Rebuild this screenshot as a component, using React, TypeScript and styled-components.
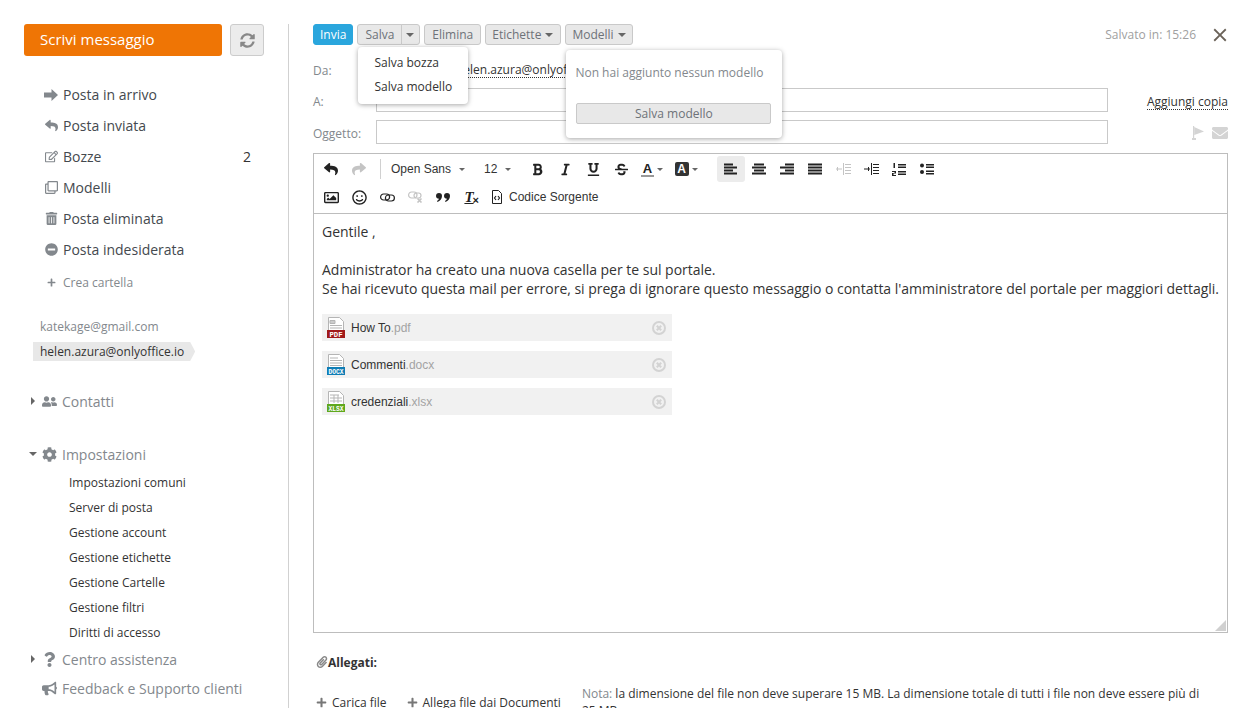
import React from 'react';
import styled, { createGlobalStyle } from 'styled-components';
import {
  FaReply, FaShare, FaRegEdit, FaRegClone, FaTrashAlt, FaMinusCircle, FaUserFriends, FaCog,
  FaQuestion, FaBullhorn, FaPaperclip, FaPlus, FaEnvelope, FaSyncAlt, FaBold, FaItalic, FaUnderline,
  FaStrikethrough, FaRegImage, FaRegSmile,
} from 'react-icons/fa';
import { MdClose } from 'react-icons/md';

const GlobalStyle = createGlobalStyle`
  html, body { margin: 0; padding: 0; background: #fff; overflow: hidden; }
  body { font-family: "Open Sans", "Liberation Sans", sans-serif; font-size: 12px; color: #333; }
  * { box-sizing: border-box; }
`;

const Page = styled.div`
  display: flex;
  width: 1240px;
  height: 708px;
  padding-top: 24px;
  overflow: hidden;
`;

/* sidebar */
const Sidebar = styled.aside`
  width: 289px;
  flex: none;
  height: 700px;
  padding-left: 24px;
  border-right: 1px solid #d1d1d1;
`;

const ComposeRow = styled.div`
  display: flex;
  gap: 8px;
`;

const ComposeButton = styled.div`
  width: 198px;
  height: 32px;
  padding-left: 16px;
  background: #ef7505;
  border-radius: 3px;
  color: #fff;
  font-size: 15px;
  line-height: 31px;
`;

const RefreshButton = styled.div`
  width: 34px;
  height: 32px;
  display: flex;
  align-items: center;
  justify-content: center;
  background: #ececec;
  border: 1px solid #ccc;
  border-radius: 3px;
  color: #888;
  font-size: 15px;
`;

const FolderList = styled.ul`
  list-style: none;
  margin: 23px 0 0;
  padding: 0;
`;

const Folder = styled.li`
  display: flex;
  align-items: center;
  height: 31px;
  padding-left: 20px;
  color: #44494e;
  font-size: 14px;
`;

const FolderIcon = styled.span`
  display: flex;
  justify-content: center;
  width: 14px;
  margin-right: 5px;
  color: #83888d;
  font-size: 13px;
`;

const FolderCount = styled.span`
  margin-left: auto;
  margin-right: 37px;
  color: #333;
`;

const CreateFolder = styled(Folder)`
  margin-top: 2px;
  color: #83888d;
  font-size: 12px;
`;

const Accounts = styled.div`
  margin-top: 19px;
  display: flex;
  flex-direction: column;
  align-items: flex-start;
  gap: 6px;
  padding-left: 9px;
`;

const Account = styled.div<{ $active?: boolean }>`
  height: 19px;
  padding: 0 ${({ $active }) => ($active ? '11px' : '7px')} 0 7px;
  line-height: 19px;
  color: ${({ $active }) => ($active ? '#333' : '#83888d')};
  background: ${({ $active }) => ($active ? '#e8e8e8' : 'transparent')};
  clip-path: polygon(0 0, calc(100% - 5px) 0, 100% 50%, calc(100% - 5px) 100%, 0 100%);
`;

const Section = styled.div<{ $top: number }>`
  display: flex;
  align-items: center;
  height: 20px;
  margin-top: ${({ $top }) => $top}px;
  color: #83888d;
  font-size: 14px;
`;

const Caret = styled.span<{ $open?: boolean; $hidden?: boolean }>`
  width: 0;
  height: 0;
  flex: none;
  margin-left: ${({ $open }) => ($open ? '5px' : '7px')};
  margin-right: ${({ $open }) => ($open ? '5px' : '7px')};
  visibility: ${({ $hidden }) => ($hidden ? 'hidden' : 'visible')};
  border-style: solid;
  border-color: transparent;
  ${({ $open }) =>
    $open
      ? 'border-width: 4px 4px 0 4px; border-top-color: #666;'
      : 'border-width: 4px 0 4px 4px; border-left-color: #666;'}
`;

const SectionIcon = styled.span`
  display: flex;
  justify-content: center;
  width: 15px;
  margin-right: 5px;
  color: #83888d;
  font-size: 15px;
`;

const SubList = styled.ul`
  list-style: none;
  margin: 6px 0 0;
  padding: 0 0 0 45px;
`;

const SubItem = styled.li`
  height: 25px;
  line-height: 25px;
  color: #333;
`;

/* main column */
const Main = styled.main`
  width: 915px;
  margin-left: 24px;
  flex: none;
`;

const TopBar = styled.div`
  display: flex;
  align-items: flex-start;
  height: 21px;
  gap: 4px;
`;

const Btn = styled.div<{ $primary?: boolean; $caret?: boolean; $right?: number }>`
  position: relative;
  height: 21px;
  display: flex;
  align-items: center;
  gap: ${({ $caret }) => ($caret ? '4px' : '3px')};
  padding: 0 ${({ $right }) => $right ?? 7}px 0 ${({ $primary, $caret }) => ($primary || $caret ? '6px' : '7px')};
  background: ${({ $primary }) => ($primary ? '#2aa6dd' : '#e8e8e8')};
  border: 1px solid ${({ $primary }) => ($primary ? '#2aa6dd' : '#c9c9c9')};
  border-radius: 3px;
  color: ${({ $primary }) => ($primary ? '#fff' : '#6d7278')};
  font-size: 12px;
`;

const SplitLeft = styled(Btn)`
  border-radius: 3px 0 0 3px;
`;

const SplitRight = styled(Btn)`
  width: 19px;
  margin-left: -5px;
  padding: 0 0 0 4px;
  border-radius: 0 3px 3px 0;
`;

const BtnCaret = styled.span`
  width: 0;
  height: 0;
  border-style: solid;
  border-color: #666 transparent transparent;
  border-width: 4px 4px 0;
`;

const Popup = styled.div`
  position: absolute;
  z-index: 5;
  background: #fff;
  border-radius: 4px;
  box-shadow: 0 1px 5px rgba(0, 0, 0, 0.35);
`;

const SaveMenu = styled(Popup)`
  top: 22px;
  left: 0;
  width: 110px;
  height: 57px;
  padding-top: 4px;
  color: #333;
`;

const SaveMenuItem = styled.div`
  height: 24px;
  padding-left: 16px;
  line-height: 24px;
`;

const TemplateMenu = styled(Popup)`
  top: 25px;
  left: 0;
  width: 216px;
  height: 88px;
  padding: 14px 11px 0 10px;
  color: #83888d;
`;

const TemplateNote = styled.div`
  height: 18px;
  margin-left: -1px;
  line-height: 18px;
  white-space: nowrap;
`;

const TemplateButton = styled.div`
  height: 21px;
  margin-top: 21px;
  background: #e8e8e8;
  border: 1px solid #c9c9c9;
  border-radius: 2px;
  color: #6d7278;
  text-align: center;
  line-height: 20px;
`;

const SavedAt = styled.div`
  margin-left: auto;
  line-height: 21px;
  color: #a0a0a0;
`;

const CloseIcon = styled.span`
  display: flex;
  align-items: center;
  height: 21px;
  margin: 0 -3px 0 9px;
  color: #6a6258;
  font-size: 22px;
`;

const FieldRow = styled.div<{ $top: number }>`
  display: flex;
  align-items: center;
  margin-top: ${({ $top }) => $top}px;
  height: 24px;
`;

const FieldLabel = styled.label<{ $low?: boolean }>`
  width: 63px;
  flex: none;
  padding-top: ${({ $low }) => ($low ? '3px' : '0')};
  color: #83888d;
`;

const FromValue = styled.span`
  padding-left: 2px;
  color: #333;
  border-bottom: 1px dotted #333;
  line-height: 15px;
  white-space: nowrap;
`;

const FieldBox = styled.div`
  width: 732px;
  height: 24px;
  flex: none;
  border: 1px solid #c9c9c9;
`;

const AddCopy = styled.span`
  margin: 4px 0 0 auto;
  color: #333;
  border-bottom: 1px dotted #333;
  line-height: 15px;
`;

const FieldIcons = styled.div`
  margin-left: auto;
  display: flex;
  align-items: center;
  gap: 8px;
  padding-top: 2px;
  color: #d4d4d4;
  font-size: 16px;
`;

const Editor = styled.div`
  position: relative;
  height: 480px;
  margin-top: 9px;
  border: 1px solid #bdbdbd;
`;

const EditorTools = styled.div`
  height: 60px;
  padding: 1px 0 2px 3px;
  border-bottom: 1px solid #bdbdbd;
`;

const ToolRow = styled.div`
  display: flex;
  height: 28px;
`;

const Tool = styled.span<{ $active?: boolean; $muted?: boolean; $width?: number; $size?: number }>`
  width: ${({ $width }) => $width ?? 28}px;
  height: 26px;
  flex: none;
  margin-top: 1px;
  display: flex;
  align-items: center;
  justify-content: center;
  gap: 3px;
  border-radius: 3px;
  background: ${({ $active }) => ($active ? '#ececec' : 'transparent')};
  color: ${({ $muted }) => ($muted ? '#c4c4c4' : '#222')};
  font-size: ${({ $size }) => $size ?? 13}px;
`;

const ToolDivider = styled.span`
  width: 1px;
  height: 20px;
  margin: 4px 0 0 7px;
  background: #d0d0d0;
`;

const ToolGap = styled.span`
  width: 14px;
  flex: none;
`;

const ToolSelect = styled.span<{ $width: number; $pad: number }>`
  width: ${({ $width }) => $width}px;
  height: 26px;
  flex: none;
  margin-top: 1px;
  padding-left: ${({ $pad }) => $pad}px;
  display: flex;
  align-items: center;
  gap: 8px;
  color: #333;
  font: 12px "Liberation Sans", Arial, sans-serif;
`;

const ToolCaret = styled.span`
  width: 0;
  height: 0;
  border-style: solid;
  border-color: #666 transparent transparent;
  border-width: 3px 3px 0;
`;

const ColorLetter = styled.span`
  font: bold 13px "Liberation Sans", Arial, sans-serif;
  border-bottom: 2px solid #999;
  line-height: 13px;
  padding: 0 2px;
`;

const FillLetter = styled.span`
  font: bold 12px "Liberation Sans", Arial, sans-serif;
  background: #333;
  color: #fff;
  border-radius: 2px;
  width: 14px;
  height: 14px;
  line-height: 14px;
  text-align: center;
`;

const SourceLabel = styled.span`
  margin-top: 1px;
  color: #333;
  font: 12px/26px "Liberation Sans", Arial, sans-serif;
`;

const ClearLetter = styled.span`
  position: relative;
  margin-right: 4px;
  font: italic bold 15px "Liberation Serif", serif;
  text-decoration: underline;
  &::after {
    content: '×';
    position: absolute;
    left: 8px;
    top: 5px;
    font: bold 11px "Liberation Sans", sans-serif;
  }
`;

const EditorBody = styled.div`
  padding: 8px 8px 0;
  font-size: 14px;
  line-height: 19px;
  letter-spacing: -0.015px;
  color: #333;
  white-space: nowrap;
`;

const Line = styled.div`
  min-height: 19px;
`;

const Attachments = styled.div`
  display: flex;
  flex-direction: column;
  gap: 10px;
  margin-top: 16px;
`;

const Attachment = styled.div`
  display: flex;
  align-items: center;
  width: 350px;
  height: 27px;
  padding: 0 6px 0 5px;
  background: #f1f1f1;
  font: 12px "Liberation Sans", Arial, sans-serif;
  color: #333;
`;

const FileSvg = styled.svg`
  width: 18px;
  height: 21px;
  margin-right: 6px;
  flex: none;
`;

const Ext = styled.span`
  color: #a3a3a3;
`;

const RemoveIcon = styled.svg`
  width: 14px;
  height: 14px;
  margin-left: auto;
`;

const ResizeHandle = styled.div`
  position: absolute;
  right: 1px;
  bottom: 1px;
  width: 11px;
  height: 11px;
  background: #d0d0d0;
  clip-path: polygon(100% 0, 100% 100%, 0 100%);
`;

const AttachHead = styled.div`
  display: flex;
  align-items: center;
  height: 18px;
  margin-top: 20px;
  padding-left: 3px;
  font-weight: 700;
  color: #333;
`;

const ClipIcon = styled.span`
  display: flex;
  color: #888;
  font-size: 12px;
`;

const UploadRow = styled.div`
  display: flex;
  align-items: flex-start;
  margin-top: 14px;
  padding-left: 3px;
`;

const UploadLink = styled.span<{ $gap: number }>`
  display: flex;
  align-items: center;
  gap: 5px;
  height: 17px;
  margin-top: 9px;
  margin-right: ${({ $gap }) => $gap}px;
  color: #333;
  white-space: nowrap;
`;

const PlusIcon = styled.span`
  display: flex;
  color: #777;
  font-size: 11px;
`;

const UploadNote = styled.div`
  width: 625px;
  line-height: 17px;
  color: #333;
`;

const NoteLead = styled.span`
  color: #83888d;
`;

const InboxIcon = () => (
  <svg width="14" height="12" viewBox="0 0 14 12" fill="currentColor">
    <path d="M0 3.5h7.5V0L14 6l-6.5 6V8.5H0z" />
  </svg>
);

const folders = [
  { label: 'Posta in arrivo', icon: <InboxIcon /> },
  { label: 'Posta inviata', icon: <FaReply /> },
  { label: 'Bozze', icon: <FaRegEdit />, count: 2 },
  { label: 'Modelli', icon: <FaRegClone /> },
  { label: 'Posta eliminata', icon: <FaTrashAlt /> },
  { label: 'Posta indesiderata', icon: <FaMinusCircle /> },
];

const settings = [
  'Impostazioni comuni',
  'Server di posta',
  'Gestione account',
  'Gestione etichette',
  'Gestione Cartelle',
  'Gestione filtri',
  'Diritti di accesso',
];

const files = [
  { name: 'How To', ext: '.pdf', tag: 'PDF', color: '#a11a1a' },
  { name: 'Commenti', ext: '.docx', tag: 'DOCX', color: '#0f7db5' },
  { name: 'credenziali', ext: '.xlsx', tag: 'XLSX', color: '#5fa81d' },
];

// tiny bar icons used by the alignment and list buttons
const Bars = ({ rows }: { rows: [number, number][] }) => (
  <svg width="14" height="12" viewBox="0 0 14 12" fill="#222">
    {rows.map(([x, w], i) => (
      <rect key={i} x={x} y={i * 3 + 0.5} width={w} height={2} />
    ))}
  </svg>
);

const IndentIcon = ({ muted, out }: { muted?: boolean; out?: boolean }) => (
  <svg width="16" height="12" viewBox="0 0 16 12" fill={muted ? '#c4c4c4' : '#222'}>
    <rect x="8" y="0" width="1" height="12" />
    {[1, 4, 7, 10].map(y => (
      <rect key={y} x="10" y={y} width="6" height="1" />
    ))}
    <rect x="1" y="5.5" width="6" height="1" />
    <rect x={out ? 2 : 5} y="4" width="1" height="4" />
  </svg>
);

const OrderedIcon = () => (
  <svg width="14" height="13" viewBox="0 0 14 13" fill="#222">
    <rect x="1.5" y="0" width="1.5" height="5" />
    <path d="M0 8h4v2.5H1.5V12H4v1H0v-3h2.5V9H0z" />
    <rect x="6" y="1" width="8" height="1.5" />
    <rect x="6" y="3.5" width="8" height="1.5" />
    <rect x="6" y="8" width="8" height="1.5" />
    <rect x="6" y="10.5" width="8" height="1.5" />
  </svg>
);

const BulletIcon = () => (
  <svg width="14" height="12" viewBox="0 0 14 12" fill="#222">
    <circle cx="2" cy="2.5" r="2" />
    <circle cx="2" cy="9" r="2" />
    <rect x="6" y="1" width="8" height="1.5" />
    <rect x="6" y="3.5" width="8" height="1.5" />
    <rect x="6" y="7.5" width="8" height="1.5" />
    <rect x="6" y="10" width="8" height="1.5" />
  </svg>
);

const ChainIcon = () => (
  <svg width="15" height="9" viewBox="0 0 15 9" fill="none" stroke="#222" strokeWidth="1.2">
    <rect x="0.6" y="1" width="9" height="6" rx="3" />
    <rect x="5.4" y="2" width="9" height="6" rx="3" />
  </svg>
);

const UnlinkIcon = () => (
  <svg width="15" height="12" viewBox="0 0 15 12" fill="none" stroke="#c4c4c4" strokeWidth="1.2">
    <rect x="0.6" y="1" width="8.400" height="6" rx="3" />
    <rect x="6" y="2" width="7" height="5" rx="2.5" />
    <path d="M9.5 7.5l4 4M13.5 7.5l-4 4" strokeWidth="1.6" />
  </svg>
);

const QuoteIcon = () => (
  <svg width="14" height="9" viewBox="0 0 14 9" fill="#222">
    <path d="M0 3a3 3 0 1 1 6 0c0 3-2 5-4.500 6L1 8c1-.6 1.700-1.400 2-2.200A3 3 0 0 1 0 3z" />
    <path d="M8 3a3 3 0 1 1 6 0c0 3-2 5-4.500 6L9 8c1-.6 1.700-1.400 2-2.200A3 3 0 0 1 8 3z" />
  </svg>
);

const SourceIcon = () => (
  <svg width="12" height="14" viewBox="0 0 12 14" fill="none" stroke="#222">
    <path d="M1.500.5h6l3 3v10h-9z" />
    <path d="M5 6L3.500 8 5 10M7 6l1.500 2L7 10" strokeWidth="1.2" />
  </svg>
);

const FlagIcon = () => (
  <svg width="12" height="14" viewBox="0 0 12 14" fill="currentColor">
    <path d="M1 0h1.200v12H4v2H0v-2h1z" />
    <path d="M2.200 1L12 5.500 2.200 9z" />
  </svg>
);

const RemoveGlyph = () => (
  <RemoveIcon viewBox="0 0 14 14" fill="none" stroke="#d3d3d3" strokeWidth="2">
    <circle cx="7" cy="7" r="6" />
    <path d="M4.800 4.800l4.400 4.400M9.200 4.800l-4.400 4.400" />
  </RemoveIcon>
);

const FileIcon = ({ tag, color }: { tag: string; color: string }) => (
  <FileSvg viewBox="0 0 18 21">
    <path d="M1.500.5h11l4 4v9h-15z" fill="#fff" stroke="#b5b5b5" />
    {tag === 'XLSX' ? (
      <path d="M3 4h9M3 7h12M3 10h12M7 4v8M11 4v8" stroke="#b5b5b5" />
    ) : tag === 'PDF' ? (
      <path d="M3 3.500h5v3H3zM3 8.500h12M3 11h12" stroke="#b5b5b5" fill="#ccc" />
    ) : (
      <path d="M3 4h8M3 6.500h12M3 9h12M3 11.500h12" stroke="#b5b5b5" />
    )}
    <rect y="13" width="18" height="8" fill={color} />
    <text
      x="9"
      y="19.500"
      textAnchor="middle"
      fontSize="6.500"
      fontWeight="700"
      fill="#fff"
      fontFamily="Liberation Mono"
      textLength={tag.length > 3 ? 15 : 13}
      lengthAdjust="spacingAndGlyphs"
    >
      {tag}
    </text>
  </FileSvg>
);

function App() {
  return (
    <Page>
      <GlobalStyle />
      <Sidebar>
        <ComposeRow>
          <ComposeButton>Scrivi messaggio</ComposeButton>
          <RefreshButton><FaSyncAlt /></RefreshButton>
        </ComposeRow>
        <FolderList>
          {folders.map(f => (
            <Folder key={f.label}>
              <FolderIcon>{f.icon}</FolderIcon>
              {f.label}
              {f.count ? <FolderCount>{f.count}</FolderCount> : null}
            </Folder>
          ))}
          <CreateFolder>
            <FolderIcon><FaPlus size={9} /></FolderIcon>
            Crea cartella
          </CreateFolder>
        </FolderList>
        <Accounts>
          <Account>katekage@gmail.com</Account>
          <Account $active>helen.azura@onlyoffice.io</Account>
        </Accounts>
        <Section $top={30}>
          <Caret />
          <SectionIcon><FaUserFriends /></SectionIcon>
          Contatti
        </Section>
        <Section $top={33}>
          <Caret $open />
          <SectionIcon><FaCog /></SectionIcon>
          Impostazioni
        </Section>
        <SubList>
          {settings.map(s => (
            <SubItem key={s}>{s}</SubItem>
          ))}
        </SubList>
        <Section $top={4}>
          <Caret />
          <SectionIcon><FaQuestion /></SectionIcon>
          Centro assistenza
        </Section>
        <Section $top={9}>
          <Caret $hidden />
          <SectionIcon><FaBullhorn /></SectionIcon>
          Feedback e Supporto clienti
        </Section>
      </Sidebar>
      <Main>
        <TopBar>
          <Btn $primary $right={6}>Invia</Btn>
          <SplitLeft>
            Salva
            <SaveMenu>
              <SaveMenuItem>Salva bozza</SaveMenuItem>
              <SaveMenuItem>Salva modello</SaveMenuItem>
            </SaveMenu>
          </SplitLeft>
          <SplitRight><BtnCaret /></SplitRight>
          <Btn>Elimina</Btn>
          <Btn $caret>Etichette <BtnCaret /></Btn>
          <Btn $caret $right={6}>
            Modelli <BtnCaret />
            <TemplateMenu>
              <TemplateNote>Non hai aggiunto nessun modello</TemplateNote>
              <TemplateButton>Salva modello</TemplateButton>
            </TemplateMenu>
          </Btn>
          <SavedAt>Salvato in: 15:26</SavedAt>
          <CloseIcon><MdClose /></CloseIcon>
        </TopBar>
        <FieldRow $top={13}>
          <FieldLabel>Da:</FieldLabel>
          <FromValue>Helen Azura &lt;helen.azura@onlyoffice.io&gt;</FromValue>
        </FieldRow>
        <FieldRow $top={6}>
          <FieldLabel $low>A:</FieldLabel>
          <FieldBox />
          <AddCopy>Aggiungi copia</AddCopy>
        </FieldRow>
        <FieldRow $top={8}>
          <FieldLabel $low>Oggetto:</FieldLabel>
          <FieldBox />
          <FieldIcons><FlagIcon /><FaEnvelope /></FieldIcons>
        </FieldRow>
        <Editor>
          <EditorTools>
            <ToolRow>
              <Tool $size={14}><FaReply /></Tool>
              <Tool $muted $size={14}><FaShare /></Tool>
              <ToolDivider />
              <ToolSelect $width={94} $pad={10}>Open Sans <ToolCaret /></ToolSelect>
              <ToolSelect $width={48} $pad={9}>12 <ToolCaret /></ToolSelect>
              <Tool><FaBold /></Tool>
              <Tool><FaItalic /></Tool>
              <Tool><FaUnderline /></Tool>
              <Tool><FaStrikethrough /></Tool>
              <Tool $width={34}><ColorLetter>A</ColorLetter><ToolCaret /></Tool>
              <Tool $width={34}><FillLetter>A</FillLetter><ToolCaret /></Tool>
              <ToolGap />
              <Tool $active><Bars rows={[[0, 9], [0, 13], [0, 9], [0, 13]]} /></Tool>
              <Tool><Bars rows={[[2, 10], [0, 14], [2, 10], [0, 14]]} /></Tool>
              <Tool><Bars rows={[[5, 9], [0, 14], [5, 9], [0, 14]]} /></Tool>
              <Tool><Bars rows={[[0, 14], [0, 14], [0, 14], [0, 14]]} /></Tool>
              <Tool><IndentIcon muted out /></Tool>
              <Tool><IndentIcon /></Tool>
              <Tool><OrderedIcon /></Tool>
              <Tool><BulletIcon /></Tool>
            </ToolRow>
            <ToolRow>
              <Tool $size={15}><FaRegImage /></Tool>
              <Tool $size={15}><FaRegSmile /></Tool>
              <Tool><ChainIcon /></Tool>
              <Tool><UnlinkIcon /></Tool>
              <Tool><QuoteIcon /></Tool>
              <Tool><ClearLetter>T</ClearLetter></Tool>
              <Tool $width={24}><SourceIcon /></Tool>
              <SourceLabel>Codice Sorgente</SourceLabel>
            </ToolRow>
          </EditorTools>
          <EditorBody>
            <Line>Gentile ,</Line>
            <Line />
            <Line>Administrator ha creato una nuova casella per te sul portale.</Line>
            <Line>Se hai ricevuto questa mail per errore, si prega di ignorare questo messaggio o contatta l'amministratore del portale per maggiori dettagli.</Line>
            <Attachments>
              {files.map(f => (
                <Attachment key={f.tag}>
                  <FileIcon tag={f.tag} color={f.color} />
                  {f.name}<Ext>{f.ext}</Ext>
                  <RemoveGlyph />
                </Attachment>
              ))}
            </Attachments>
          </EditorBody>
          <ResizeHandle />
        </Editor>
        <AttachHead><ClipIcon><FaPaperclip /></ClipIcon>Allegati:</AttachHead>
        <UploadRow>
          <UploadLink $gap={20}><PlusIcon><FaPlus /></PlusIcon>Carica file</UploadLink>
          <UploadLink $gap={21}><PlusIcon><FaPlus /></PlusIcon>Allega file dai Documenti</UploadLink>
          <UploadNote>
            <NoteLead>Nota:</NoteLead> la dimensione del file non deve superare 15 MB. La dimensione totale di tutti i file non deve essere più di 25 MB.
          </UploadNote>
        </UploadRow>
      </Main>
    </Page>
  );
}

export default App;
